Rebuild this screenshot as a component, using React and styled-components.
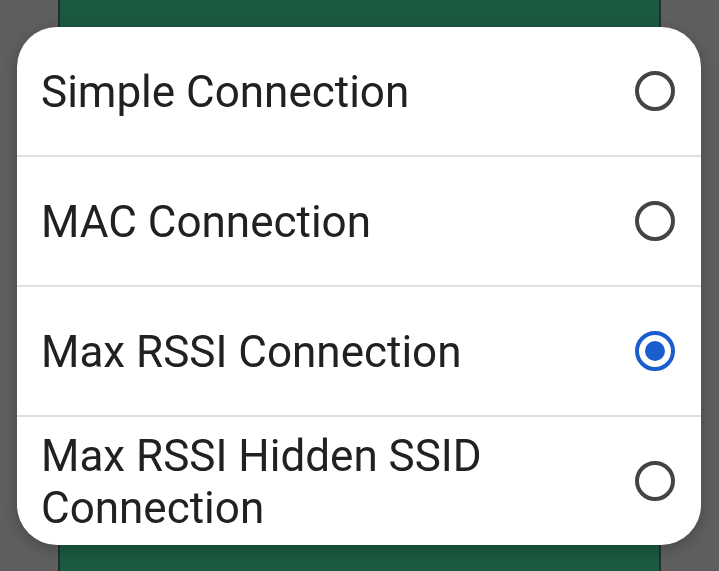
import React, { useState } from "react";
import styled, { createGlobalStyle } from "styled-components";

const GlobalStyle = createGlobalStyle`
  html, body {
    margin: 0;
    padding: 0;
    height: 100%;
    background: #5f5f5f;
    font-family: Roboto, "Noto Sans", sans-serif;
  }
  #root {
    height: 100%;
  }
`;

const Page = styled.div`
  height: 100vh;
  display: flex;
  justify-content: center;
`;

const Backdrop = styled.div`
  width: 599px;
  height: 100%;
  background: #1b5a40;
  border-left: 2px solid #22302a;
  border-right: 2px solid #22302a;
`;

const Overlay = styled.div`
  position: fixed;
  inset: 0;
  display: flex;
  align-items: center;
  justify-content: center;
`;

const Dialog = styled.div`
  width: 684px;
  margin-right: 1px;
  background: #ffffff;
  border-radius: 40px;
  overflow: hidden;
  box-shadow: 0 4px 16px rgba(0, 0, 0, 0.25);
  display: flex;
  flex-direction: column;
`;

const Row = styled.label`
  height: 128px;
  box-sizing: border-box;
  display: flex;
  align-items: center;
  padding: 0 26px 0 24px;
  cursor: pointer;
  & + & {
    border-top: 2px solid #e0e0e0;
    height: 130px;
  }
`;

const Label = styled.span`
  flex: 1;
  font-size: 44px;
  line-height: 52px;
  color: #212121;
  padding-right: 60px;
  padding-top: 2px;
`;

const Radio = ({ checked }) => (
  <svg width="40" height="40" viewBox="0 0 40 40">
    <circle
      cx="20"
      cy="20"
      r="18"
      fill="none"
      stroke={checked ? "#1a5dcf" : "#444444"}
      strokeWidth="4"
    />
    {checked && <circle cx="20" cy="20" r="10" fill="#1a5dcf" />}
  </svg>
);

const options = [
  "Simple Connection",
  "MAC Connection",
  "Max RSSI Connection",
  "Max RSSI Hidden SSID Connection",
];

export default function App() {
  const [selected, setSelected] = useState(2);
  return (
    <>
      <GlobalStyle />
      <Page>
        <Backdrop />
      </Page>
      <Overlay>
        <Dialog>
          {options.map((o, i) => (
            <Row key={o} onClick={() => setSelected(i)}>
              <Label>{o}</Label>
              <Radio checked={selected === i} />
            </Row>
          ))}
        </Dialog>
      </Overlay>
    </>
  );
}
